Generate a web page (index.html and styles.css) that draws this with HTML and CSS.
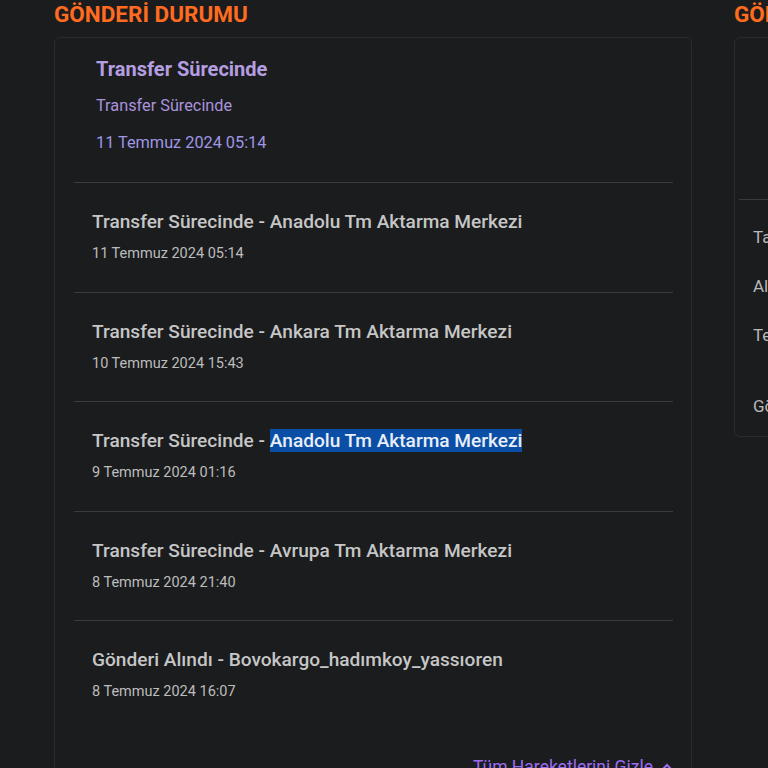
FILE: index.html
```html
<!DOCTYPE html>
<html lang="tr">
<head>
  <meta charset="UTF-8" />
  <meta name="viewport" content="width=device-width, initial-scale=1.0" />
  <title>Gönderi Durumu</title>
  <link rel="stylesheet" href="styles.css">
</head>
<body>

  <div class="page">
    <section class="col-main">
      <h2 class="section-title">GÖNDERİ DURUMU</h2>
      <div class="card">
        <div class="current">
          <div class="current-title">Transfer Sürecinde</div>
          <div class="current-sub">Transfer Sürecinde</div>
          <div class="current-date">11 Temmuz 2024 05:14</div>
        </div>

        <div class="move">
          <div class="move-title">Transfer Sürecinde - Anadolu Tm Aktarma Merkezi</div>
          <div class="move-date">11 Temmuz 2024 05:14</div>
        </div>
        <div class="move">
          <div class="move-title">Transfer Sürecinde - Ankara Tm Aktarma Merkezi</div>
          <div class="move-date">10 Temmuz 2024 15:43</div>
        </div>
        <div class="move">
          <div class="move-title">Transfer Sürecinde - <span class="selected">Anadolu Tm Aktarma Merkezi</span></div>
          <div class="move-date">9 Temmuz 2024 01:16</div>
        </div>
        <div class="move">
          <div class="move-title">Transfer Sürecinde - Avrupa Tm Aktarma Merkezi</div>
          <div class="move-date">8 Temmuz 2024 21:40</div>
        </div>
        <div class="move last">
          <div class="move-title">Gönderi Alındı - Bovokargo_hadımkoy_yassıoren</div>
          <div class="move-date">8 Temmuz 2024 16:07</div>
        </div>

        <a class="toggle" href="#">
          Tüm Hareketlerini Gizle
          <svg width="12" height="12" viewBox="0 0 12 12"><path d="M2 8 L6 4 L10 8" fill="none" stroke="currentColor" stroke-width="2"/></svg>
        </a>
      </div>
    </section>

    <section class="col-side">
      <h2 class="section-title">GÖNDERİ BİLGİLERİ</h2>
      <div class="card side-card">
        <div class="side-top"></div>
        <div class="side-row">Takip No</div>
        <div class="side-row">Alıcı</div>
        <div class="side-row">Teslimat Adresi</div>
        <div class="side-row gap">Gönderici</div>
      </div>
    </section>
  </div>

</body>
</html>
```

FILE: styles.css
```css
body {
  margin: 0;
  background: #1b1c1e;
  font-family: Roboto, "Noto Sans", Arial, sans-serif;
  color: #c9c9c9;
  overflow: hidden;
}
.page {
  display: flex;
  gap: 42px;
  padding-left: 54px;
  width: 1200px;
}
.col-main {
  width: 638px;
  flex-shrink: 0;
}
.col-side {
  width: 300px;
  flex-shrink: 0;
}
.section-title {
  margin: 0;
  height: 37px;
  line-height: 28px;
  font-size: 22.5px;
  font-weight: 700;
  color: #ff6b1f;
}
.card {
  border: 1px solid #2a2b2e;
  border-radius: 6px;
  background: #1b1c1e;
}
.col-main .card {
  padding: 0 18px 0 19px;
  height: 760px;
}

/* newest status on top */
.current {
  padding: 18px 22px 0 22px;
  height: 126px;
  border-bottom: 1px solid #3a3b3e;
}
.current-title {
  font-size: 20px;
  font-weight: 700;
  color: #b49ee0;
  line-height: 26px;
}
.current-sub {
  margin-top: 13px;
  font-size: 16.3px;
  color: #a993dc;
  line-height: 21px;
}
.current-date {
  margin-top: 16px;
  font-size: 16.3px;
  color: #9f96e6;
  line-height: 21px;
}

.move {
  box-sizing: border-box;
  height: 109.5px;
  border-bottom: 1px solid #3a3b3e;
  padding: 0 18px;
}
.move.last {
  border-bottom: none;
}
.move-title {
  padding-top: 26px;
  font-size: 19.1px;
  font-weight: 500;
  line-height: 25px;
  color: #c6c6c6;
}
.move-date {
  margin-top: 11px;
  font-size: 14.5px;
  line-height: 18px;
  color: #bdbdbd;
}
.selected {
  background: #0b4ea6;
  color: #e9eef8;
}

.toggle {
  display: flex;
  justify-content: flex-end;
  align-items: center;
  gap: 8px;
  margin-top: 26px;
  color: #9a6cf0;
  font-size: 17.5px;
  text-decoration: none;
}

.side-card {
  height: 398px;
  border-right: none;
  border-radius: 6px 0 0 6px;
  padding-left: 18px;
  color: #b8b8b8;
  font-size: 17px;
}
.side-top {
  height: 161px;
  border-bottom: 1px solid #3a3b3e;
  margin-left: -14px;
  margin-bottom: 26px;
}
.side-row {
  height: 49px;
  line-height: 22px;
}
.side-row.gap {
  margin-top: 22px;
}
```
